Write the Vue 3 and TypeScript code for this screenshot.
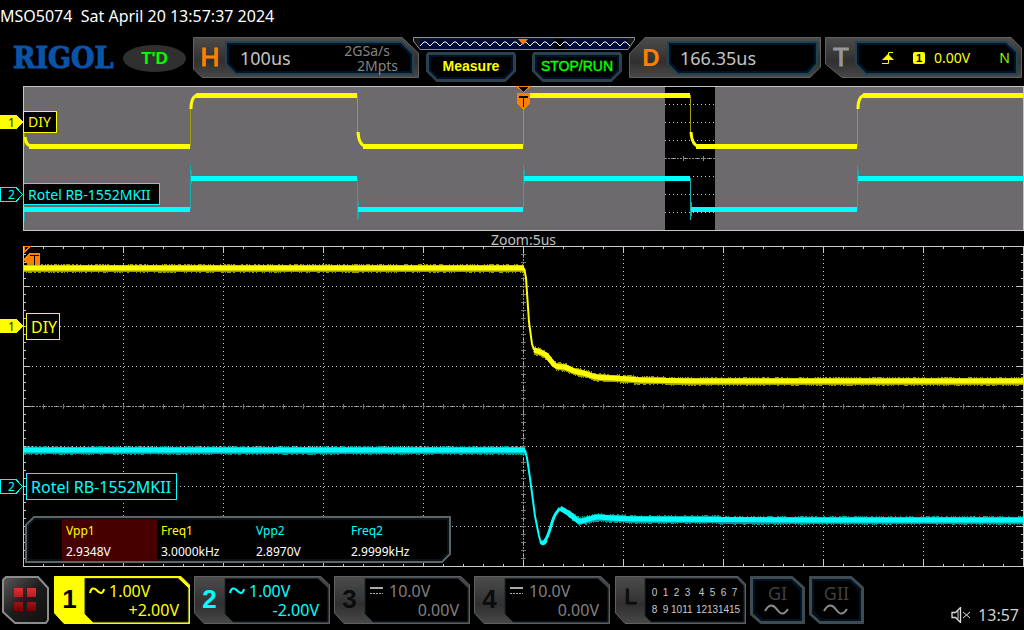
<script setup lang="ts">
type Point = [number, number]

interface Channel {
  id: string
  coupling: 'AC' | 'DC'
  scale: string
  offset: string
  tone: string
}

interface Measurement {
  name: string
  value: string
  tone: string
  selected: boolean
}

const channels: Channel[] = [
  { id: '1', coupling: 'AC', scale: '1.00V', offset: '+2.00V', tone: 'active' },
  { id: '2', coupling: 'AC', scale: '1.00V', offset: '-2.00V', tone: 'cyan' },
  { id: '3', coupling: 'DC', scale: '10.0V', offset: '0.00V', tone: 'off' },
  { id: '4', coupling: 'DC', scale: '10.0V', offset: '0.00V', tone: 'off' },
]

const measurements: Measurement[] = [
  { name: 'Vpp1', value: '2.9348V', tone: 'yellow', selected: true },
  { name: 'Freq1', value: '3.0000kHz', tone: 'yellow', selected: false },
  { name: 'Vpp2', value: '2.8970V', tone: 'cyan', selected: false },
  { name: 'Freq2', value: '2.9999kHz', tone: 'cyan', selected: false },
]

const generators = ['I', 'II']
const logicLow = [0, 1, 2, 3, 4, 5, 6, 7]
const logicHigh = [8, 9, 10, 11, 12, 13, 14, 15]

const steps = (from: number, to: number, step: number): number[] => {
  const out: number[] = []
  for (let v = from; v <= to; v += step) out.push(v)
  return out
}

// Zoomed graticule: 10 x 8 divisions
const gridX = steps(123.5, 923.5, 100)
const gridY = steps(40.5, 280.5, 40)
const frameTicks = [
  ...steps(43, 1003, 20).map((x) => `M${x}.5 1v${(x - 23) % 100 ? 2 : 6}M${x}.5 320v-${(x - 23) % 100 ? 2 : 6}`),
  ...steps(8, 312, 8).map((y) => `M24 ${y}.5h${y % 40 ? 2 : 6}M1023 ${y}.5h-${y % 40 ? 2 : 6}`),
].join('')
const axisTicks = [
  ...steps(43, 1003, 20).map((x) => `M${x}.5 158v5`),
  ...steps(8, 312, 8).map((y) => `M521 ${y}.5h5`),
].join('')

const overviewRows = steps(18.5, 126.5, 18)

const smooth = (pts: Point[]): string => {
  let d = `M${pts[0][0]} ${pts[0][1]}`
  for (let i = 0; i < pts.length - 1; i++) {
    const a = pts[Math.max(0, i - 1)]
    const b = pts[i]
    const c = pts[i + 1]
    const e = pts[Math.min(pts.length - 1, i + 2)]
    const k = Math.min(c[0] - b[0], 12) / 6
    const s1 = (c[1] - a[1]) / Math.max(1, c[0] - a[0])
    const s2 = (e[1] - b[1]) / Math.max(1, e[0] - b[0])
    d += `C${b[0] + k * 2} ${b[1] + k * 2 * s1} ${c[0] - k * 2} ${c[1] - k * 2 * s2} ${c[0]} ${c[1]}`
  }
  return d
}

const yellowTail: Point[] = [
  [534, 104], [540, 106], [546, 109], [551, 115], [556, 120], [565, 121],
  [574, 125], [583, 127], [597, 131], [613, 132], [640, 134], [690, 135], [1023, 135],
]
const cyanTail: Point[] = [
  [543, 298], [548, 289], [554, 271], [560, 262], [568, 267], [579, 275],
  [589, 273], [598, 271], [611, 272], [640, 273], [800, 274], [1023, 274],
]
const yellowFall = 'M524 22L526 32L529 76L532 98L534 104'
const cyanFall = 'M525 204L527 212L530 232L535 270L539 290Q541 298 543 298'

const levelAt = (pts: Point[], x: number): number => {
  for (let i = 1; i < pts.length; i++) {
    if (x <= pts[i][0]) {
      const t = (x - pts[i - 1][0]) / (pts[i][0] - pts[i - 1][0])
      return pts[i - 1][1] + t * (pts[i][1] - pts[i - 1][1])
    }
  }
  return pts[pts.length - 1][1]
}

// Deterministic acquisition noise around a trace
const noise = (pts: Point[], seed: number): string => {
  let s = seed
  const rnd = () => {
    s = (s * 16807) % 2147483647
    return s / 2147483647
  }
  let d = ''
  for (let x = pts[0][0]; x < pts[pts.length - 1][0]; x++) {
    const y = Math.round(levelAt(pts, x))
    const up = rnd() > 0.6 ? 4 : 3
    const down = rnd() > 0.6 ? 5 : 4
    d += `M${x}.5 ${y - up}v${up + down}`
  }
  return d
}
const yellowNoise = noise([[24, 22], [524, 22]], 77) + noise(yellowTail, 91)
const cyanNoise = noise([[24, 204], [525, 204]], 15) + noise(cyanTail.slice(4), 33)

const overviewYellow =
  'M29 60H190M196 9H357M363 60H523M524 9H690M696 60H857M863 9H1023'
const overviewYellowBends =
  'M25 51Q26 60 32 60M191 23Q191 10 198 9M358 46Q359 60 366 60M691 46Q692 60 699 60M858 23Q858 10 865 9'
const overviewCyan = 'M24 123H190M191 92H357M358 123H523M524 92H690M691 123H857M858 92H1023'
const overviewYellowEdges = 'M24.5 46V60M190.5 60V20M357.5 9V50M523.5 60V9M690.5 9V50M857.5 60V20'
const overviewCyanEdges =
  'M24.5 120V135M190.5 123V79M191.5 84V98M357.5 92V134M358.5 116V133M523.5 123V79M524.5 84V98M690.5 92V134M691.5 116V130M857.5 123V79M858.5 84V98'

const memoryWave = (() => {
  let d = 'M7 9'
  for (let x = 7; x < 213; x += 10) d += `l4 -4h2l4 4`
  return d
})()
</script>

<template>
  <main class="scope">
    <header class="title">MSO5074&nbsp; Sat April 20 13:57:37 2024</header>

    <section class="toolbar" aria-label="Acquisition status">
      <div class="logo">RIGOL</div>
      <div class="state">T'D</div>

      <div class="panel horizontal">
        <svg class="frame" viewBox="0 0 226 41" preserveAspectRatio="none" aria-hidden="true">
          <defs>
            <linearGradient id="metal" x1="0" y1="0" x2="0" y2="1">
              <stop offset="0" stop-color="#4c4c4c" />
              <stop offset="0.6" stop-color="#303030" />
              <stop offset="1" stop-color="#484848" />
            </linearGradient>
          </defs>
          <path class="shell" d="M.5.5H209L225.500 16V40.500H9L.5 32Z" />
          <path class="screen" d="M33 5H208L220 17V37H43L33 27Z" />
          <path class="glow" d="M35 7H207L218 18V35H44L35 26Z" />
        </svg>
        <div class="body">
          <span class="tag orange">H</span>
          <span class="big">100us</span>
          <span class="rates"><span class="rate-top">2GSa/s</span><span>2Mpts</span></span>
        </div>
      </div>

      <div class="center">
        <svg class="memory" viewBox="0 0 222 13" aria-hidden="true">
          <path d="M.5.5H221.500V3L215 12.500H7L.5 4Z" fill="#181818" stroke="#8c8c8c" />
          <rect x="7" y="2" width="208" height="10" fill="#000c3c" />
          <rect x="141" y="2" width="10" height="10" fill="#000" />
          <path :d="memoryWave" fill="none" stroke="#fff" stroke-width="1" />
          <path d="M105 2H115L110 8Z" fill="#ff8000" />
        </svg>
        <div class="keys">
          <button v-for="key in ['Measure', 'STOP/RUN']" :key="key" type="button" class="key" :class="key === 'Measure' ? 'measure' : 'run'">
            <svg class="frame" viewBox="0 0 90 30" preserveAspectRatio="none" aria-hidden="true">
              <path d="M2.500 1.500H87.500L88.500 3V19L79 28.500H11L1.500 19V3Z" fill="#000" stroke="#2b414b" stroke-width="3" />
              <path d="M4 4H86V18L78 26H12L4 18Z" fill="none" stroke="#00122a" stroke-width="2" />
            </svg>
            <span>{{ key }}</span>
          </button>
        </div>
      </div>

      <div class="panel delay">
        <svg class="frame" viewBox="0 0 192 41" preserveAspectRatio="none" aria-hidden="true">
          <path class="shell" d="M16 .5H191.500V30L181 40.500H.5V17Z" />
          <path class="screen" d="M39 5H188V27L179 37H49L39 27Z" />
          <path class="glow" d="M41 7H186V26L178 35H50L41 26Z" />
        </svg>
        <div class="body">
          <span class="tag orange heavy">D</span>
          <span class="big">166.35us</span>
        </div>
      </div>

      <div class="panel trigger">
        <svg class="frame" viewBox="0 0 197 41" preserveAspectRatio="none" aria-hidden="true">
          <path class="shell" d="M.5.5H186L196.500 11V40.500H17L.5 27Z" />
          <path class="screen" d="M31 5H181L192 15V37H41L31 27Z" />
          <path class="glow" d="M33 7H180L190 16V35H42L33 26Z" />
        </svg>
        <div class="body">
          <span class="tag grey">T</span>
          <svg class="edge" viewBox="0 0 12 14" aria-hidden="true">
            <path d="M0 12.500H6.500V1.500H11" fill="none" stroke="#ff0" stroke-width="1" />
            <path d="M6 3L12 9H0Z" fill="#ff0" />
          </svg>
          <span class="source">1</span>
          <span class="level">0.00V</span>
          <span class="mode">N</span>
        </div>
      </div>
    </section>

    <svg class="plot" viewBox="0 0 1024 145" role="img" aria-label="Full capture">
      <rect x="23.500" y=".5" width="1000" height="144" fill="#6c6a6d" />
      <rect x="665" y="1" width="50" height="143" fill="#000" />
      <path v-for="y in overviewRows" :key="y" class="dots" :d="`M665 ${y}H715`" />
      <path d="M665 72.500H715" stroke="#888" stroke-dasharray="2 1" />
      <path d="M683.500 70v5M703.500 70v5" stroke="#888" />
      <path :d="overviewYellowEdges" stroke="#a39d10" />
      <path :d="overviewCyanEdges" stroke="#10b0b0" />
      <path :d="overviewYellow" fill="none" stroke="#ff0" stroke-width="5" />
      <path class="trace" :d="overviewYellowBends" fill="none" stroke="#ff0" stroke-width="3" />
      <path :d="overviewCyan" fill="none" stroke="#0ff" stroke-width="5" />
      <rect x="23.500" y=".5" width="1000" height="144" fill="none" stroke="#c4c4c4" />
      <path d="M0 29H16L23 36L16 43H0Z" fill="#ff0" />
      <text x="8" y="41" class="mark" fill="#222">1</text>
      <path d="M.5 101.500H16L22.500 108.500L16 115.500H.5Z" fill="#000" stroke="#0ff" />
      <text x="8" y="113" class="mark" fill="#0ff">2</text>
      <rect x="23.500" y="25.500" width="33" height="21" fill="#000" stroke="#ff0" />
      <text x="28" y="41" class="small-label" fill="#ff0">DIY</text>
      <rect x="23.500" y="97.500" width="136" height="21" fill="#000" stroke="#0ff" />
      <text x="28" y="114" class="small-label" fill="#0ff">Rotel RB-1552MKII</text>
      <path d="M517 .5H530L523.500 6.500Z" fill="#000" stroke="#ff8000" />
      <path d="M517 7H530V18L523.500 24L517 18Z" fill="#ff8000" />
      <path d="M519 11H528M523.500 11V21" stroke="#000" stroke-width="1.500" />
    </svg>

    <div class="zoom-label">Zoom:5us</div>

    <div class="zoomed">
      <svg class="plot" viewBox="0 0 1024 321" role="img" aria-label="Zoomed capture">
        <path v-for="y in gridY" :key="`h${y}`" class="dots" :d="`M24 ${y}H1023`" />
        <path v-for="x in gridX" :key="`v${x}`" class="dots" :d="`M${x} 1V320`" />
        <path d="M24 160.500H1023M523.500 1V320" stroke="#8a8a8a" stroke-dasharray="2 1" />
        <path :d="axisTicks" stroke="#777" />
        <path :d="frameTicks" stroke="#c8c8c8" />
        <rect x="23.500" y=".5" width="1000" height="320" fill="none" stroke="#c8c8c8" />
        <path d="M24 .5H30L24 6.500Z" fill="#000" stroke="#ff8000" />
        <path d="M23 13.500L30 7H40V20H30Z" fill="#ff8000" />
        <path d="M30 9.500H39M34.500 9V20" stroke="#000" stroke-width="1.500" />
        <path :d="yellowNoise" stroke="#9b9b00" />
        <path :d="cyanNoise" stroke="#009b9b" />
        <g fill="none" class="trace">
          <path d="M24 22H524" stroke="#ff0" stroke-width="5" />
          <path :d="yellowFall" stroke="#ff0" stroke-width="2" />
          <path :d="smooth(yellowTail)" stroke="#ff0" stroke-width="5" />
          <path d="M24 204H525" stroke="#0ff" stroke-width="5" />
          <path :d="cyanFall" stroke="#0ff" stroke-width="2" />
          <path d="M541 295Q543 300 546 294" stroke="#0ff" stroke-width="4" />
          <path :d="smooth(cyanTail.slice(0, 4))" stroke="#0ff" stroke-width="3" />
          <path :d="smooth(cyanTail.slice(3))" stroke="#0ff" stroke-width="5" />
        </g>
        <path d="M0 73H16L23 80L16 87H0Z" fill="#ff0" />
        <text x="8" y="85" class="mark" fill="#222">1</text>
        <path d="M.5 233.500H16L22.500 240.500L16 247.500H.5Z" fill="#000" stroke="#0ff" />
        <text x="8" y="245" class="mark" fill="#0ff">2</text>
        <rect x="26.500" y="67.500" width="33" height="26" fill="#000" stroke="#ff0" />
        <text x="31" y="87" class="large-label" fill="#ff0">DIY</text>
        <rect x="26.500" y="227.500" width="150" height="26" fill="#000" stroke="#0ff" />
        <text x="31" y="247" class="large-label" fill="#0ff">Rotel RB-1552MKII</text>
      </svg>

      <div class="results">
        <svg class="frame" viewBox="0 0 426 47" preserveAspectRatio="none" aria-hidden="true">
          <path d="M9 1H425V38L417 46H1V9Z" fill="#000" stroke="#5c6468" stroke-width="2" />
          <path d="M10 3H423V37L416 44H3V10Z" fill="none" stroke="#14242c" />
        </svg>
        <table>
          <thead>
            <tr>
              <th v-for="m in measurements" :key="m.name" scope="col" :class="[m.tone, { selected: m.selected }]">{{ m.name }}</th>
            </tr>
          </thead>
          <tbody>
            <tr>
              <td v-for="m in measurements" :key="m.name" :class="{ selected: m.selected }">{{ m.value }}</td>
            </tr>
          </tbody>
        </table>
      </div>
    </div>

    <footer class="bottom">
      <button type="button" class="cell menu" aria-label="Menu">
        <svg class="frame" viewBox="0 0 48 48" preserveAspectRatio="none" aria-hidden="true">
          <defs>
            <linearGradient id="menu" x1="0" y1="0" x2="1" y2="1">
              <stop offset="0" stop-color="#5a5a5a" />
              <stop offset="0.5" stop-color="#1c1c1c" />
              <stop offset="1" stop-color="#101010" />
            </linearGradient>
            <linearGradient id="tile" x1="0" y1="0" x2="0" y2="1">
              <stop offset="0" stop-color="#e03030" />
              <stop offset="1" stop-color="#780000" />
            </linearGradient>
          </defs>
          <path d="M4 1H36L46 12V44L44 47H13L1 36V4Z" fill="url(#menu)" stroke="#8c8c8c" stroke-width="2" stroke-linejoin="round" />
          <path d="M12 12h9v9h-9ZM25 12h9v9h-9ZM12 26h9v9h-9ZM25 26h9v9h-9Z" fill="url(#tile)" />
        </svg>
      </button>

      <button v-for="c in channels" :key="c.id" type="button" class="cell channel" :class="c.tone">
        <svg class="frame" viewBox="0 0 136 48" preserveAspectRatio="none" aria-hidden="true">
          <path class="shell" d="M.5.5H127L135.500 9V47.500H10L.5 37Z" />
          <path class="screen" d="M31 2.500H124L134 12V46H39L31 38Z" />
        </svg>
        <span class="body">
          <span class="number">{{ c.id }}</span>
          <span class="values">
            <span class="line">
              <svg class="coupling" viewBox="0 0 16 10" aria-hidden="true">
                <path v-if="c.coupling === 'AC'" d="M1 7C2 2 5 1 8 4.500S14 8 15 3" fill="none" stroke="currentColor" stroke-width="2" />
                <g v-else stroke="#aaa"><path d="M1 2H14" stroke-width="2" /><path d="M1 7.500H14" stroke-dasharray="2 1" /></g>
              </svg>
              <span>{{ c.scale }}</span>
            </span>
            <span class="line end">{{ c.offset }}</span>
          </span>
        </span>
      </button>

      <button type="button" class="cell logic off">
        <svg class="frame" viewBox="0 0 131 48" preserveAspectRatio="none" aria-hidden="true">
          <path class="shell" d="M.5.5H123L130.500 8V47.500H10L.5 37Z" />
          <path class="screen" d="M30 2.500H122L129 10V46H36L30 40Z" />
        </svg>
        <span class="body">
          <span class="number">L</span>
          <span class="bits">
            <span v-for="row in [logicLow, logicHigh]" :key="row[0]" class="bit-row">
              <span v-for="n in row" :key="n">{{ n }}</span>
            </span>
          </span>
        </span>
      </button>

      <button v-for="g in generators" :key="g" type="button" class="cell generator">
        <svg class="frame" viewBox="0 0 55 48" preserveAspectRatio="none" aria-hidden="true">
          <path d="M1.500 1.500H42L53.500 12V46.500H11L1.500 38Z" fill="#000" stroke="#3f4b50" stroke-width="3" />
          <path d="M4 4H41L51 14V44H13L4 36Z" fill="none" stroke="#001428" stroke-width="2" />
          <path d="M15 35C19 28 23 28 27 33.500S34 39 38 33" fill="none" stroke="#8c8c8c" stroke-width="2" />
        </svg>
        <span class="gen-name">G{{ g }}</span>
      </button>

      <div class="clock">
        <svg class="speaker" viewBox="0 0 20 16" role="img" aria-label="Muted">
          <path d="M1 5.500H4.500L9.500 .5V15.500L4.500 10.500H1Z" fill="none" stroke="#ddd" stroke-width="1.300" />
          <path d="M7 4V12" stroke="#ddd" />
          <path d="M12 5L19 11M19 5L12 11" stroke="#ddd" />
        </svg>
        <time>13:57</time>
      </div>
    </footer>
  </main>
</template>

<style>
body {
  background: #000;
}
</style>

<style scoped>
.scope {
  min-height: 100vh;
  box-sizing: border-box;
  overflow: hidden;
  background: #000;
  color: #fff;
  font-family: "Noto Sans", "Open Sans", sans-serif;
}
button {
  appearance: none;
  border: 0;
  padding: 0;
  margin: 0;
  background: none;
  font: inherit;
  color: inherit;
  text-align: left;
}
svg {
  display: block;
}
.title {
  height: 32px;
  line-height: 32px;
  font-size: 16px;
  white-space: pre;
}
.toolbar {
  display: flex;
  align-items: flex-start;
  height: 45px;
  margin: 5px 2px 4px 13px;
}
.logo {
  width: 110px;
  line-height: 42px;
  font-family: "DejaVu Serif Condensed", "Liberation Serif", serif;
  font-size: 30px;
  font-weight: 700;
  color: #0a54a8;
  -webkit-text-stroke: 1px currentColor;
}
.state {
  width: 63px;
  height: 27px;
  margin-top: 8px;
  margin-right: 7px;
  border-radius: 50%;
  background: #303030;
  color: #0f0;
  font-family: "Liberation Sans", sans-serif;
  font-size: 17px;
  font-weight: 700;
  line-height: 28px;
  text-align: center;
}
.panel,
.key,
.cell,
.results {
  display: grid;
  grid-template-columns: minmax(0, 1fr);
}
.panel > *,
.key > *,
.cell > *,
.results > * {
  grid-area: 1 / 1;
}
.frame {
  width: 100%;
  height: 100%;
}
.shell {
  fill: url(#metal);
  stroke: #606060;
}
.screen {
  fill: #000;
  stroke: #1f4450;
  stroke-width: 2;
}
.glow {
  fill: none;
  stroke: #00142c;
  stroke-width: 2;
}
.panel {
  height: 41px;
}
.horizontal {
  flex: 1 1 226px;
}
.delay {
  flex: 1 1 192px;
  margin-right: 4px;
}
.trigger {
  flex: 1 1 197px;
}
.body {
  display: flex;
  align-items: center;
}
.tag {
  font-family: "Liberation Sans", sans-serif;
  font-size: 26px;
  line-height: 41px;
  text-align: center;
  -webkit-text-stroke: 1px currentColor;
}
.horizontal .tag {
  width: 34px;
}
.delay .tag {
  width: 38px;
  padding-left: 6px;
  box-sizing: border-box;
}
.heavy {
  font-size: 24px;
  font-weight: 700;
  -webkit-text-stroke: 0;
}
.trigger .tag {
  width: 32px;
}
.orange {
  color: #ff8000;
}
.grey {
  color: #989898;
}
.big {
  padding-top: 1px;
  font-size: 18px;
  color: #c4c4c4;
  margin-left: 13px;
}
.rates {
  display: flex;
  flex-direction: column;
  align-items: flex-end;
  margin-left: auto;
  padding-right: 21px;
  font-size: 14px;
  line-height: 15px;
  color: #848484;
}
.rate-top {
  padding-right: 8px;
}
.center {
  flex: none;
  width: 222px;
  margin: 0 -6px;
}
.memory {
  width: 222px;
  height: 13px;
}
.keys {
  display: flex;
  justify-content: center;
  gap: 16px;
  padding-top: 2px;
}
.key {
  width: 90px;
  height: 30px;
  font-family: "Liberation Sans", sans-serif;
  font-size: 14px;
  line-height: 29px;
  text-align: center;
}
.measure {
  color: #ff0;
  font-weight: 700;
}
.run {
  color: #0f0;
  -webkit-text-stroke: 0.4px currentColor;
}
.edge {
  width: 12px;
  height: 14px;
  margin-left: 25px;
}
.source {
  width: 12px;
  height: 12px;
  margin-left: 19px;
  border-radius: 2px;
  background: #ff0;
  color: #000;
  font-family: "Liberation Sans", sans-serif;
  font-size: 11px;
  font-weight: 700;
  line-height: 13px;
  text-align: center;
}
.level {
  margin-left: 9px;
  font-size: 14px;
  color: #ff0;
}
.mode {
  margin-left: auto;
  padding-right: 12px;
  font-size: 14px;
  color: #80ff00;
}
.plot {
  width: 100%;
  height: auto;
  shape-rendering: crispEdges;
}
.trace {
  shape-rendering: auto;
}
.dots {
  stroke: #c8c8c8;
  stroke-dasharray: 1 3;
}
.mark {
  font-size: 12px;
}
.small-label {
  font-size: 14px;
}
.large-label {
  font-size: 16px;
}
.zoom-label {
  height: 15px;
  padding-left: 23px;
  line-height: 18px;
  font-size: 14px;
  text-align: center;
  color: #c0c0c0;
}
.zoomed {
  position: relative;
}
.results {
  position: absolute;
  left: 25px;
  bottom: 4px;
  width: 426px;
  height: 47px;
}
table {
  border-collapse: collapse;
  table-layout: fixed;
  width: 380px;
  height: 42px;
  margin: 3px 0 0 37px;
  font-size: 12px;
  line-height: 19px;
}
th,
td {
  padding: 2px 0 0 4px;
  text-align: left;
  font-weight: 400;
}
.yellow {
  color: #ff0;
}
.cyan {
  color: #0ff;
}
.selected {
  background: #460000;
}
.bottom {
  display: flex;
  gap: 4px;
  height: 48px;
  padding: 9px 5px 6px 2px;
}
.cell {
  flex: 0 1 auto;
  height: 48px;
}
.menu {
  width: 48px;
}
.channel {
  width: 136px;
}
.channel .body,
.logic .body {
  align-items: stretch;
}
.number {
  flex: none;
  width: 31px;
  font-family: "Liberation Sans", sans-serif;
  font-size: 26px;
  font-weight: 700;
  line-height: 46px;
  text-align: center;
}
.values {
  flex: 1;
  padding: 6px 11px 0 4px;
  font-size: 16px;
}
.line {
  display: flex;
  gap: 4px;
  line-height: 19px;
}
.end {
  justify-content: flex-end;
}
.coupling {
  width: 16px;
  height: 10px;
  margin-top: 4px;
}
.cell .screen {
  stroke: #182830;
  stroke-width: 1;
}
.active {
  color: #ff0;
}
.active .shell {
  fill: #ff0;
  stroke: #ff0;
}
.active .number {
  color: #000;
}
.off {
  color: #808080;
}
.off .number {
  color: #0c0c0c;
}
.logic {
  width: 131px;
  margin-left: 1px;
}
.logic .number {
  font-size: 22px;
  font-weight: 400;
  line-height: 42px;
  -webkit-text-stroke: 1px currentColor;
}
.bits {
  padding: 8px 0 0 3px;
}
.bit-row {
  display: grid;
  grid-template-columns: repeat(8, 11px);
  line-height: 17px;
  justify-items: center;
  font-family: "Liberation Sans", sans-serif;
  font-size: 10px;
  color: #c8c8c8;
}
.bit-row > :nth-child(n + 5) {
  padding-left: 6px;
}
.generator {
  width: 55px;
}
.gen-name {
  font-size: 18px;
  line-height: 34px;
  text-align: center;
  color: #404040;
}
.clock {
  display: flex;
  align-items: center;
  gap: 7px;
  margin: 30px 0 0 auto;
  font-size: 16px;
  line-height: 18px;
  color: #d0d0d0;
}
.speaker {
  width: 20px;
  height: 16px;
}
</style>
